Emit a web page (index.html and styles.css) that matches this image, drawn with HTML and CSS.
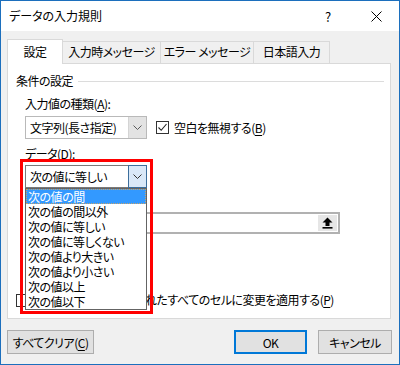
FILE: index.html
```html
<!DOCTYPE html>
<html lang="ja">
<head>
    <meta charset="UTF-8">
    <title>データの入力規則</title>
    <link rel="stylesheet" href="styles.css">
</head>
<body>
    <div class="window">
        <div class="titlebar">
            <span class="title">データの入力規則</span>
            <span class="help">?</span>
            <svg class="close" width="11" height="11" viewBox="0 0 11 11">
                <path d="M0.5 0.5 L10.5 10.5 M10.5 0.5 L0.5 10.5" stroke="#000" stroke-width="1" fill="none"/>
            </svg>
        </div>

        <div class="dialog">
            <div class="tabs">
                <div class="tab active">設定</div>
                <div class="tab t2">入力時メッセージ</div>
                <div class="tab t3">エラー メッセージ</div>
                <div class="tab t4">日本語入力</div>
            </div>

            <div class="panel">
                <div class="group-title">
                    <span>条件の設定</span>
                    <i class="rule"></i>
                </div>

                <div class="group-body">
                    <div class="label">入力値の種類(<u>A</u>):</div>
                    <div class="row">
                        <div class="combo">
                            <span class="combo-text">文字列(長さ指定)</span>
                            <span class="combo-btn">
                                <svg width="9" height="5" viewBox="0 0 9 5"><path d="M0.5 0.5 L4.5 4.5 L8.5 0.5" stroke="#5a5a5a" fill="none"/></svg>
                            </span>
                        </div>
                        <label class="check">
                            <span class="box">
                                <svg width="11" height="11" viewBox="0 0 11 11"><path d="M1.5 5.5 L4.2 8.3 L9.5 2" stroke="#222" stroke-width="1.1" fill="none"/></svg>
                            </span>
                            <span>空白を無視する(<u>B</u>)</span>
                        </label>
                    </div>

                    <div class="label">データ(<u>D</u>):</div>
                    <div class="dropdown">
                        <div class="combo open">
                            <span class="combo-text">次の値に等しい</span>
                            <span class="combo-btn">
                                <svg width="9" height="5" viewBox="0 0 9 5"><path d="M0.5 0.5 L4.5 4.5 L8.5 0.5" stroke="#333" fill="none"/></svg>
                            </span>
                        </div>
                        <ul class="listbox">
                            <li class="selected">次の値の間</li>
                            <li>次の値の間以外</li>
                            <li>次の値に等しい</li>
                            <li>次の値に等しくない</li>
                            <li>次の値より大きい</li>
                            <li>次の値より小さい</li>
                            <li>次の値以上</li>
                            <li>次の値以下</li>
                        </ul>
                        <div class="mark"></div>
                    </div>

                    <div class="ref-input">
                        <span class="ref-btn">
                            <svg width="11" height="12" viewBox="0 0 11 12">
                                <path d="M5.5 0.5 L10.5 5.5 H7.5 V9 H3.5 V5.5 H0.5 Z" fill="#000"/>
                                <rect x="0.5" y="10" width="10" height="1.6" fill="#000"/>
                            </svg>
                        </span>
                    </div>
                </div>

                <label class="check apply">
                    <span class="box"></span>
                    <span>同じ入力規則が設定されたすべてのセルに変更を適用する(<u>P</u>)</span>
                </label>
            </div>

            <div class="buttons">
                <button class="btn clear">すべてクリア(<u>C</u>)</button>
                <span class="spacer"></span>
                <button class="btn ok">OK</button>
                <button class="btn cancel">キャンセル</button>
            </div>
        </div>
    </div>
</body>
</html>
```

FILE: styles.css
```css
* {
    margin: 0;
    padding: 0;
    box-sizing: border-box;
}

body {
    font-family: "Noto Sans CJK JP", "Noto Sans", sans-serif;
    font-size: 12px;
    font-feature-settings: "palt";
    letter-spacing: -0.5px;
    color: #000;
    background: #fff;
}

u {
    text-decoration: underline;
    text-underline-offset: 2px;
}

.window {
    width: 400px;
    height: 365px;
    border: 1px solid #1c6fbd;
    background: #f0f0f0;
    display: flex;
    flex-direction: column;
}

/* title bar */
.titlebar {
    height: 30px;
    background: #fff;
    display: flex;
    align-items: center;
    padding-left: 8px;
}

.title {
    flex: 1;
    line-height: 16px;
    letter-spacing: 0;
}

.help {
    width: 10px;
    margin-right: 36px;
    font-size: 13px;
}

.close {
    margin-right: 17px;
}

/* body */
.dialog {
    flex: 1;
    padding: 8px 7px 0 6px;
}

.tabs {
    display: flex;
    align-items: flex-end;
    height: 24px;
    position: relative;
    z-index: 1;
}

.tab {
    height: 22px;
    line-height: 20px;
    text-align: center;
    border-top: 1px solid #d9d9d9;
    border-right: 1px solid #d9d9d9;
    background: #f0f0f0;
}

.tab.active {
    width: 56px;
    height: 25px;
    margin-bottom: -1px;
    padding-top: 3px;
    line-height: 18px;
    border-left: 1px solid #d9d9d9;
    background: #fff;
}

.t2 { width: 98px; }
.t3 { width: 93px; }
.t4 { width: 76px; }

.panel {
    width: 384px;
    height: 256px;
    background: #fff;
    border: 1px solid #d9d9d9;
    padding: 9px 0 0 8px;
}

.group-title {
    display: flex;
    align-items: center;
    height: 16px;
    line-height: 16px;
    padding-right: 6px;
}

.rule {
    flex: 1;
    height: 1px;
    margin-left: 5px;
    background: #dcdcdc;
}

.group-body {
    padding-left: 9px;
}

.label {
    line-height: 16px;
    margin-top: 7px;
}

.row {
    display: flex;
    align-items: center;
    margin-top: 4px;
}

.combo {
    width: 122px;
    height: 23px;
    display: flex;
    border: 1px solid #b9b9b9;
    background: #fff;
}

.combo-text {
    flex: 1;
    padding-left: 4px;
    line-height: 21px;
}

.combo-btn {
    width: 18px;
    background: #e3e3e3;
    border-left: 1px solid #d4d4d4;
    display: flex;
    align-items: center;
    justify-content: center;
}

.combo.open {
    border-color: #7a7a7a;
}

.combo.open .combo-btn {
    background: #d9e8f8;
    border: 1px solid #3c6e9c;
    margin: -1px -1px -1px 0;
    width: 19px;
}

.check {
    display: flex;
    align-items: center;
    gap: 5px;
    line-height: 16px;
}

.row .check {
    margin-left: 9px;
}

.box {
    width: 13px;
    height: 13px;
    border: 1px solid #333;
    background: #fff;
    display: flex;
    align-items: center;
    justify-content: center;
}

.label + .dropdown {
    margin-top: 3px;
}

.dropdown {
    position: relative;
    width: 122px;
}

.listbox {
    position: absolute;
    left: 0;
    top: 100%;
    width: 122px;
    list-style: none;
    background: #fff;
    border: 1px solid #646464;
    z-index: 2;
}

.listbox li {
    height: 15px;
    line-height: 15px;
    padding-left: 2px;
    white-space: nowrap;
}

.listbox li.selected {
    background: #3399ff;
    color: #fff;
    outline: 1px dotted #c9a46a;
    outline-offset: -1px;
}

.mark {
    position: absolute;
    left: -5px;
    top: -6px;
    width: 133px;
    height: 155px;
    border: 3px solid #ff0000;
    z-index: 3;
}

.ref-input {
    width: 315px;
    height: 22px;
    margin-top: 24px;
    border: 2px solid #b1b1b1;
    background: #fff;
    display: flex;
    justify-content: flex-end;
}

.ref-btn {
    width: 21px;
    background: #e6e6e6;
    border: 1px solid #fff;
    display: flex;
    align-items: center;
    justify-content: center;
}

.apply {
    margin-top: 58px;
    gap: 4px;
}

/* bottom buttons */
.buttons {
    display: flex;
    margin-top: 11px;
    gap: 11px;
}

.spacer {
    flex: 1;
}

.btn {
    height: 24px;
    font: inherit;
    letter-spacing: inherit;
    background: #e1e1e1;
    border: 1px solid #adadad;
    color: #000;
}

.clear { width: 87px; }
.ok {
    width: 73px;
    border: 2px solid #0078d7;
}
.cancel { width: 74px; }
```
